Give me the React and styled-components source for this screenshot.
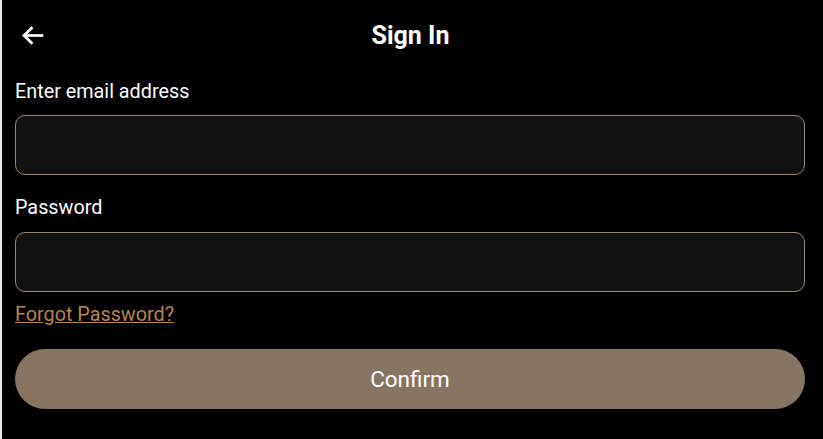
import React, { useState } from "react";
import styled, { createGlobalStyle } from "styled-components";

const Global = createGlobalStyle`
  html, body {
    margin: 0;
    padding: 0;
    background: #ececec;
  }
  body {
    font-family: Roboto, "Noto Sans", sans-serif;
  }
  * { box-sizing: border-box; }
`;

const Page = styled.div`
  margin-left: 2px;
  min-height: 439px;
  background: #000;
  color: #fff;
  padding: 0 18px 0 13px;
`;

const Header = styled.div`
  height: 70px;
  display: grid;
  grid-template-columns: 40px 1fr 40px;
  align-items: center;
`;

const BackButton = styled.button`
  background: none;
  border: none;
  padding: 0;
  margin-left: 6px;
  color: #fff;
  display: flex;
  align-items: center;
  cursor: pointer;
`;

const Title = styled.h1`
  margin: 0;
  text-align: center;
  font-size: 25px;
  font-weight: 700;
  padding-left: 1px;
`;

const Form = styled.form`
  display: flex;
  flex-direction: column;
`;

const Label = styled.label`
  font-size: 19.8px;
  line-height: 24px;
  margin: ${(p) => p.$top || 11}px 0 ${(p) => p.$bottom || 11}px;
`;

const Input = styled.input`
  height: 60px;
  width: 100%;
  background: #111;
  border: 1px solid #a08a69;
  border-radius: 10px;
  color: #fff;
  font-size: 18px;
  padding: 0 16px;
  outline: none;
  margin-bottom: ${(p) => p.$gap || 0}px;
`;

const Forgot = styled.a`
  color: #b8844a;
  font-size: 19.8px;
  line-height: 24px;
  text-decoration: underline;
  margin: 11px 0 22px;
  align-self: flex-start;
  cursor: pointer;
`;

const Confirm = styled.button`
  height: 60px;
  width: 100%;
  border: none;
  border-radius: 30px;
  background: #857562;
  color: #fff;
  font-family: inherit;
  font-size: 22.5px;
  cursor: pointer;
`;

const ArrowLeft = () => (
  <svg width="23" height="19" viewBox="0 0 22 18" fill="none" stroke="currentColor" strokeWidth="2.6" strokeLinecap="square">
    <path d="M20 9H3" />
    <path d="M10 2L3 9l7 7" />
  </svg>
);

const App = () => {
  const [email, setEmail] = useState("");
  const [password, setPassword] = useState("");

  return (
    <>
      <Global />
      <Page>
        <Header>
          <BackButton type="button"><ArrowLeft /></BackButton>
          <Title>Sign In</Title>
          <span />
        </Header>
        <Form onSubmit={(e) => e.preventDefault()}>
          <Label $top={10}>Enter email address</Label>
          <Input value={email} onChange={(e) => setEmail(e.target.value)} $gap={10} />
          <Label $bottom={12}>Password</Label>
          <Input type="password" value={password} onChange={(e) => setPassword(e.target.value)} />
          <Forgot>Forgot Password?</Forgot>
          <Confirm type="submit">Confirm</Confirm>
        </Form>
      </Page>
    </>
  );
};

export default App;
